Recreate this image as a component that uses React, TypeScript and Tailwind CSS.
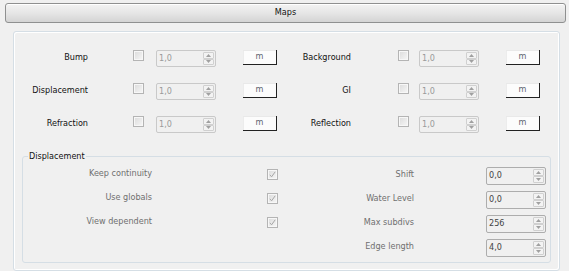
const Check = ({ checked }: { checked?: boolean }) => (
  <div className="w-[11px] h-[11px] shrink-0 border border-[#b4b4b4] bg-[#f7f7f7] p-px">
    <div className="w-full h-full bg-linear-to-br from-[#dedede] to-[#f4f4f4] flex items-center justify-center">
      {checked && (
        <svg width="7" height="7" viewBox="0 0 7 7">
          <path d="M0.8 3.8 L2.6 5.8 L6.2 0.8" fill="none" stroke="#a6a6a6" strokeWidth="1" />
        </svg>
      )}
    </div>
  </div>
);

const Spin = ({ value, enabled }: { value: string; enabled?: boolean }) => (
  <div
    className={
      enabled
        ? "flex w-[60px] h-[18px] shrink-0 rounded-[2px] border border-[#adadad] bg-[#f0f0f0]"
        : "flex w-[60px] h-[17px] shrink-0 rounded-[2px] border border-[#c9c9c9] bg-[#f0f0f0]"
    }
  >
    <div
      className={
        enabled
          ? "flex-1 flex items-center pl-[2px] text-[#444]"
          : "flex-1 flex items-center pl-[2px] text-[#9a9a9a]"
      }
    >
      {value}
    </div>
    <div className="w-[12px] flex flex-col py-px pr-px">
      <div className="flex-1 border border-[#d0d0d0] rounded-[1px] bg-[#f3f3f3] flex items-center justify-center">
        <svg width="5" height="3" viewBox="0 0 5 3">
          <path d="M0 3 L2.5 0 L5 3 Z" fill="#a0a0a0" />
        </svg>
      </div>
      <div className="flex-1 border border-[#d0d0d0] rounded-[1px] bg-[#f3f3f3] flex items-center justify-center">
        <svg width="5" height="3" viewBox="0 0 5 3">
          <path d="M0 0 L2.5 3 L5 0 Z" fill="#a0a0a0" />
        </svg>
      </div>
    </div>
  </div>
);

const MapRow = ({ label, right }: { label: string; right?: boolean }) => (
  <div className="flex items-start w-[263px] h-[17px]">
    <div className="w-[74px] text-right leading-[15px] text-[#111] whitespace-nowrap">{label}</div>
    <div className={right ? "ml-[47px]" : "ml-[45px]"}>
      <Check />
    </div>
    <div className={right ? "ml-[10px]" : "ml-[12px]"}>
      <Spin value="1,0" />
    </div>
    <div className="ml-[27px] w-[34px] h-[15px] bg-[#fcfcfc] border-r border-b border-[#222] shadow-[inset_0_1px_0_#e9e9e9,inset_1px_0_0_#ececec] flex items-center justify-center text-[#5f6470]">
      m
    </div>
  </div>
);

const rows = [
  ["Bump", "Background"],
  ["Displacement", "GI"],
  ["Refraction", "Reflection"],
];

const dispChecks = ["Keep continuity", "Use globals", "View dependent"];
const dispSpins = [
  ["Shift", "0,0"],
  ["Water Level", "0,0"],
  ["Max subdivs", "256"],
  ["Edge length", "4,0"],
];

export default function App() {
  return (
    <div className="w-[569px] h-[271px] overflow-hidden bg-[#f0f0f0] pt-[3px] font-['DejaVu_Sans_Condensed','DejaVu_Sans',sans-serif] text-[9px] [font-stretch:condensed]">
      <div className="ml-[5px] w-[561px] h-[20px] rounded-[3px] border border-[#8f9090] bg-linear-to-b from-[#f3f3f3] via-[#e6e6e6] to-[#d4d4d4] shadow-[inset_0_1px_0_#fff] flex items-center justify-center text-[#111]">
        Maps
      </div>

      <div className="ml-[13px] mt-[8px] w-[547px] h-[240px] rounded-[3px] border border-[#d5dee5] shadow-[inset_1px_1px_0_#fff,inset_-1px_-1px_0_#fff] pt-[18px]">
        <div className="flex flex-col gap-[16px]">
          {rows.map(([a, b]) => (
            <div key={a} className="flex">
              <MapRow label={a} />
              <MapRow label={b} right />
            </div>
          ))}
        </div>

        <fieldset className="ml-[8px] mt-[17px] w-[529px] h-[113px] rounded-[3px] border border-[#d5dee5]">
          <legend className="ml-[5px] px-px leading-[12px] text-[#111]">Displacement</legend>
          <div className="flex">
            <div className="w-[260px] flex flex-col">
              {dispChecks.map((l) => (
                <div key={l} className="h-[24px] flex items-center">
                  <div className="w-[129px] text-right text-[#6f6f6f] whitespace-nowrap">{l}</div>
                  <div className="ml-[115px]">
                    <Check checked />
                  </div>
                </div>
              ))}
            </div>
            <div className="flex flex-col pt-[2px]">
              {dispSpins.map(([l, v]) => (
                <div key={l} className="h-[24px] flex items-start">
                  <div className="w-[131px] pt-[4px] leading-[12px] text-right text-[#6f6f6f] whitespace-nowrap">{l}</div>
                  <div className="ml-[72px] mt-[3px]">
                    <Spin value={v} enabled />
                  </div>
                </div>
              ))}
            </div>
          </div>
        </fieldset>
      </div>
    </div>
  );
}
